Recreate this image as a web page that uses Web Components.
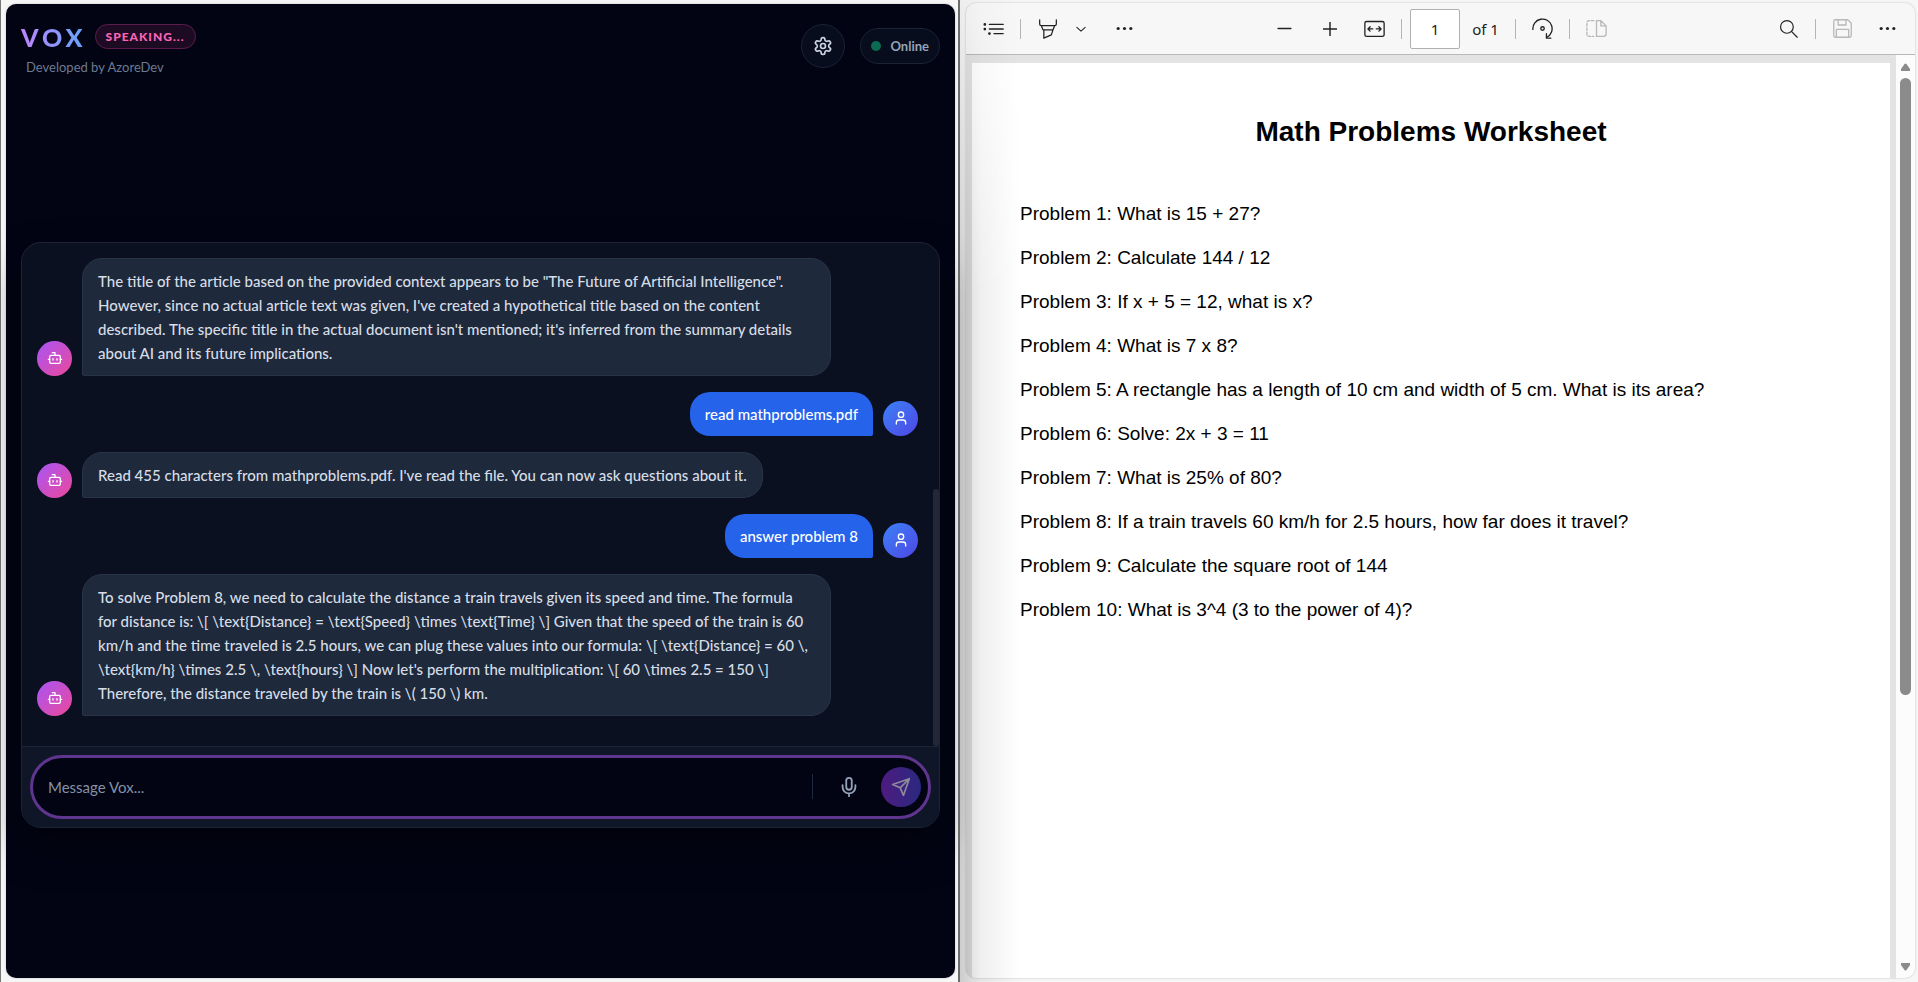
<!DOCTYPE html>
<html lang="en">
<head>
<meta charset="utf-8">
<title>Vox</title>
<style>
  html, body {
    height: 100%;
    margin: 0;
  }
  body {
    font-family: Lato, "Open Sans", sans-serif;
  }
</style>
</head>
<body>
<split-view>
  <vox-app slot="left">
    <chat-message from="bot">The title of the article based on the provided context appears to be "The Future of Artificial Intelligence". However, since no actual article text was given, I've created a hypothetical title based on the content described. The specific title in the actual document isn't mentioned; it's inferred from the summary details about AI and its future implications.</chat-message>
    <chat-message from="user">read mathproblems.pdf</chat-message>
    <chat-message from="bot">Read 455 characters from mathproblems.pdf. I've read the file. You can now ask questions about it.</chat-message>
    <chat-message from="user">answer problem 8</chat-message>
    <chat-message from="bot">To solve Problem 8, we need to calculate the distance a train travels given its speed and time. The formula for distance is: \[ \text{Distance} = \text{Speed} \times \text{Time} \] Given that the speed of the train is 60 km/h and the time traveled is 2.5 hours, we can plug these values into our formula: \[ \text{Distance} = 60 \, \text{km/h} \times 2.5 \, \text{hours} \] Now let's perform the multiplication: \[ 60 \times 2.5 = 150 \] Therefore, the distance traveled by the train is \( 150 \) km.</chat-message>
  </vox-app>
  <pdf-viewer slot="right">
    <pdf-toolbar slot="toolbar"></pdf-toolbar>
    <pdf-page heading="Math Problems Worksheet">
      <p>Problem 1: What is 15 + 27?</p>
      <p>Problem 2: Calculate 144 / 12</p>
      <p>Problem 3: If x + 5 = 12, what is x?</p>
      <p>Problem 4: What is 7 x 8?</p>
      <p>Problem 5: A rectangle has a length of 10 cm and width of 5 cm. What is its area?</p>
      <p>Problem 6: Solve: 2x + 3 = 11</p>
      <p>Problem 7: What is 25% of 80?</p>
      <p>Problem 8: If a train travels 60 km/h for 2.5 hours, how far does it travel?</p>
      <p>Problem 9: Calculate the square root of 144</p>
      <p>Problem 10: What is 3^4 (3 to the power of 4)?</p>
    </pdf-page>
  </pdf-viewer>
</split-view>

<script>
const icons = {
  bot: '<path d="M12 8V4H8M2 14h2M20 14h2M15 13v2M9 13v2"/><rect x="4" y="8" width="16" height="12" rx="2"/>',
  user: '<path d="M19 21v-2a4 4 0 0 0-4-4H9a4 4 0 0 0-4 4v2"/><circle cx="12" cy="7" r="4"/>',
  gear: '<path d="M12.22 2h-.44a2 2 0 0 0-2 2v.18a2 2 0 0 1-1 1.73l-.43.25a2 2 0 0 1-2 0l-.15-.08a2 2 0 0 0-2.73.73l-.22.38a2 2 0 0 0 .73 2.73l.15.1a2 2 0 0 1 1 1.72v.51a2 2 0 0 1-1 1.74l-.15.09a2 2 0 0 0-.73 2.73l.22.38a2 2 0 0 0 2.73.73l.15-.08a2 2 0 0 1 2 0l.43.25a2 2 0 0 1 1 1.73V20a2 2 0 0 0 2 2h.44a2 2 0 0 0 2-2v-.18a2 2 0 0 1 1-1.73l.43-.25a2 2 0 0 1 2 0l.15.08a2 2 0 0 0 2.73-.73l.22-.39a2 2 0 0 0-.73-2.73l-.15-.08a2 2 0 0 1-1-1.74v-.5a2 2 0 0 1 1-1.74l.15-.09a2 2 0 0 0 .73-2.73l-.22-.38a2 2 0 0 0-2.73-.73l-.15.08a2 2 0 0 1-2 0l-.43-.25a2 2 0 0 1-1-1.73V4a2 2 0 0 0-2-2z"/><circle cx="12" cy="12" r="3"/>',
  mic: '<path d="M12 2a3 3 0 0 0-3 3v7a3 3 0 0 0 6 0V5a3 3 0 0 0-3-3ZM19 10v2a7 7 0 0 1-14 0v-2M12 19v3"/>',
  send: '<path d="m22 2-7 20-4-9-9-4ZM22 2 11 13"/>',
  contents: '<path d="M7 7h15M7 12h15M12 17h10"/><path stroke-width="3" d="M2 7h.01M2 12h.01M7 17h.01"/>',
  highlight: '<path d="M2 1v5q0 2 2 2h16q2 0 2-2V1M4 8l2 5h12l2-5M7 13v10l9-4 2-6"/>',
  chevron: '<path d="m2 8 10 9 10-9"/>',
  more: '<g fill="currentColor" stroke="none"><circle cx="4" cy="12" r="2"/><circle cx="12" cy="12" r="2"/><circle cx="20" cy="12" r="2"/></g>',
  minus: '<path d="M4 12h16"/>',
  plus: '<path d="M0 12h24M12 0v24"/>',
  fit: '<rect x="1" y="4" width="22" height="17" rx="2"/><path d="M10 12.500H4.500M7 10l-2.500 2.500L7 15M14 12.500h5.500M17 10l2.500 2.500L17 15"/>',
  rotate: '<path d="M1 13a11 11 0 1 1 16 9"/><path d="M16.500 18v5h5"/><circle cx="12" cy="12" r="2"/>',
  pages: '<path d="M12 3h5l6 6v9q0 3-3 3h-8zM17 3v6h6"/><path stroke-dasharray="3 2" d="M9 3H4Q1 3 1 6v12q0 3 3 3h5"/>',
  search: '<circle cx="10" cy="10" r="8"/><path d="m16 16 7 7"/>',
  save: '<path d="M2 4q0-2 2-2h14l4 4v14q0 2-2 2H4q-2 0-2-2zM7 2v6h9V2M5 22v-9h14v9"/>'
};

function icon(name, size, stroke) {
  return `<svg width="${size}" height="${size}" viewBox="0 0 24 24" fill="none" stroke="currentColor" stroke-width="${stroke || 2}" stroke-linecap="round" stroke-linejoin="round" aria-hidden="true">${icons[name]}</svg>`;
}

class SplitView extends HTMLElement {
  connectedCallback() {
    this.attachShadow({ mode: "open" }).innerHTML = `
      <style>
        :host {
          display: grid;
          grid-template-columns: minmax(0, 1fr) auto minmax(0, 1fr);
          height: 100vh;
          background: #f6f6f6;
        }
        .divider {
          width: 2px;
          background: #6b6b6b;
        }
      </style>
      <slot name="left"></slot>
      <div class="divider"></div>
      <slot name="right"></slot>
    `;
  }
}
customElements.define("split-view", SplitView);

class StatusBadge extends HTMLElement {
  connectedCallback() {
    this.attachShadow({ mode: "open" }).innerHTML = `
      <style>
        :host {
          display: block;
          box-sizing: border-box;
          padding: 0 10px;
          border: 1px solid #5b1d4b;
          border-radius: 13px;
          background: #1d0b24;
          color: #fb64b6;
          font-size: 12px;
          font-weight: 900;
          line-height: 23px;
          letter-spacing: 1px;
        }
      </style>
      <slot></slot>
    `;
  }
}
customElements.define("status-badge", StatusBadge);

class VoxApp extends HTMLElement {
  connectedCallback() {
    this.attachShadow({ mode: "open" }).innerHTML = `
      <style>
        :host {
          display: block;
          box-sizing: border-box;
          min-height: 0;
          padding: 4px 3px 4px 5px;
          border-left: 1px solid #777;
        }
        .window {
          display: flex;
          flex-direction: column;
          box-sizing: border-box;
          height: 100%;
          padding: 0 15px;
          border-radius: 10px;
          background: #020414;
          box-shadow: 0 0 2px #8888;
        }
        header {
          display: flex;
          justify-content: space-between;
          padding: 20px 0 16px;
        }
        .brand {
          display: flex;
          align-items: center;
          gap: 8px;
        }
        h1 {
          margin: 0;
          font-size: 25px;
          font-weight: 900;
          line-height: 24px;
          letter-spacing: 4px;
          background: linear-gradient(90deg, #c084fc, #60a5fa);
          -webkit-background-clip: text;
          background-clip: text;
          color: transparent;
        }
        .author {
          margin: 10px 0 0 5px;
          color: #6b7a90;
          font-size: 13px;
          line-height: 16px;
        }
        .actions {
          display: flex;
          align-items: center;
          align-self: flex-start;
          gap: 15px;
        }
        button {
          display: grid;
          place-items: center;
          width: 44px;
          height: 44px;
          padding: 0;
          border: 1px solid #1a2233;
          border-radius: 50%;
          background: #080d1e;
          color: #cbd5e1;
        }
        .online {
          display: flex;
          align-items: center;
          gap: 9px;
          padding: 0 10px;
          border: 1px solid #1a2233;
          border-radius: 18px;
          background: #080d1e;
          color: #94a3b8;
          font-size: 13px;
          font-weight: 700;
          line-height: 34px;
        }
        .online i {
          width: 10px;
          height: 10px;
          border-radius: 50%;
          background: #0b6b53;
        }
        main {
          display: flex;
          flex: 1;
          flex-direction: column;
          justify-content: center;
          min-height: 0;
        }
        .chat {
          border: 1px solid #1c2535;
          border-radius: 20px;
          background: #0b1020;
          box-shadow: 0 20px 40px #0006;
          overflow: hidden;
        }
        .messages {
          position: relative;
          display: flex;
          flex-direction: column;
          gap: 16px;
          padding: 15px 21px 30px 15px;
        }
        .thumb {
          position: absolute;
          right: 0;
          bottom: 0;
          width: 6px;
          height: 51%;
          border-radius: 3px;
          background: #232838;
        }
      </style>
      <div class="window">
        <header>
          <div>
            <div class="brand">
              <h1>VOX</h1>
              <status-badge>SPEAKING...</status-badge>
            </div>
            <p class="author">Developed by AzoreDev</p>
          </div>
          <div class="actions">
            <button type="button" aria-label="Settings">${icon("gear", 20)}</button>
            <div class="online"><i></i>Online</div>
          </div>
        </header>
        <main>
          <div class="chat">
            <div class="messages">
              <slot></slot>
              <div class="thumb"></div>
            </div>
            <message-composer></message-composer>
          </div>
        </main>
      </div>
    `;
  }
}
customElements.define("vox-app", VoxApp);

class ChatMessage extends HTMLElement {
  connectedCallback() {
    const from = this.getAttribute("from");
    this.attachShadow({ mode: "open" }).innerHTML = `
      <style>
        :host {
          display: flex;
          align-items: flex-end;
          gap: 10px;
          font-size: 15px;
          font-weight: 500;
          line-height: 24px;
        }
        :host([from="user"]) {
          flex-direction: row-reverse;
        }
        .avatar {
          display: grid;
          place-items: center;
          flex: none;
          width: 35px;
          height: 35px;
          border-radius: 50%;
          background: linear-gradient(135deg, #a855f7, #ec4899);
          color: #fff;
        }
        :host([from="user"]) .avatar {
          background: linear-gradient(135deg, #3b82f6, #4f46e5);
        }
        .bubble {
          box-sizing: border-box;
          max-width: 85%;
          padding: 10px 15px;
          border: 1px solid #283548;
          border-radius: 20px 20px 20px 2px;
          background: #1e293b;
          color: #d6dde7;
        }
        :host([from="user"]) .bubble {
          border: 0;
          border-radius: 20px 20px 2px 20px;
          background: #2563eb;
          color: #fff;
        }
      </style>
      <div class="avatar">${icon(from, 16)}</div>
      <div class="bubble"><slot></slot></div>
    `;
  }
}
customElements.define("chat-message", ChatMessage);

class MessageComposer extends HTMLElement {
  connectedCallback() {
    this.attachShadow({ mode: "open" }).innerHTML = `
      <style>
        :host {
          display: block;
          padding: 8px;
          border-top: 1px solid #1a2435;
          background: #0f1627;
        }
        form {
          display: flex;
          align-items: center;
          box-sizing: border-box;
          height: 64px;
          margin: 0;
          padding: 0 7px 0 15px;
          border: 3px solid #5f358f;
          border-radius: 32px;
          background: #020414;
        }
        input {
          flex: 1;
          min-width: 0;
          padding: 0;
          border: 0;
          outline: 0;
          background: none;
          color: #e2e8f0;
          font: inherit;
          font-size: 15px;
          line-height: 24px;
        }
        input::placeholder {
          color: #8591a5;
          opacity: 1;
        }
        .line {
          width: 1px;
          height: 25px;
          background: #1e293b;
        }
        button {
          display: grid;
          place-items: center;
          width: 40px;
          height: 40px;
          padding: 0;
          border: 0;
          border-radius: 50%;
          background: none;
          color: #94a3b8;
        }
        .mic {
          margin: 0 12px 0 16px;
        }
        .send {
          background: linear-gradient(90deg, #4e1c80, #2a2880);
          color: #8d8a9c;
        }
      </style>
      <form>
        <input type="text" placeholder="Message Vox..." aria-label="Message Vox">
        <div class="line"></div>
        <button class="mic" type="button" aria-label="Voice input">${icon("mic", 22)}</button>
        <button class="send" type="button" aria-label="Send">${icon("send", 20)}</button>
      </form>
    `;
  }
}
customElements.define("message-composer", MessageComposer);

class PdfViewer extends HTMLElement {
  connectedCallback() {
    this.attachShadow({ mode: "open" }).innerHTML = `
      <style>
        :host {
          position: relative;
          display: block;
          box-sizing: border-box;
          min-height: 0;
          padding: 3px 3px 4px 6px;
        }
        .frame {
          display: flex;
          flex-direction: column;
          height: 100%;
          border-radius: 10px;
          background: #e3e3e3;
          box-shadow: 0 0 2px #0004;
          overflow: hidden;
        }
        .body {
          display: flex;
          flex: 1;
          gap: 6px;
          min-height: 0;
          padding-left: 6px;
        }
        .view {
          display: flex;
          flex: 1;
          padding-top: 8px;
        }
        .scroll {
          display: flex;
          flex-direction: column;
          align-items: center;
          gap: 7px;
          width: 19px;
          padding: 8px 0 7px;
          box-sizing: border-box;
          background: #fcfcfc;
        }
        .thumb {
          width: 11px;
          height: 68%;
          border-radius: 6px;
          background: #8b8b8b;
        }
        .scroll svg:last-child {
          margin-top: auto;
        }
        /* shade cast by the window on the left */
        .shade {
          position: absolute;
          inset: 0 auto 0 0;
          width: 60px;
          background: linear-gradient(90deg, #0000002a, #00000010 35%, #0000);
          -webkit-mask: linear-gradient(#0003, #000 30%);
          mask: linear-gradient(#0003, #000 30%);
          pointer-events: none;
        }
      </style>
      <div class="frame">
        <slot name="toolbar"></slot>
        <div class="body">
          <div class="view"><slot></slot></div>
          <div class="scroll">
            <svg width="9" height="8" viewBox="0 0 9 8" fill="#8b8b8b"><path d="M3.500 1q1-1 2 0L9 6v2H0V6z"/></svg>
            <div class="thumb"></div>
            <svg width="9" height="8" viewBox="0 0 9 8" fill="#8b8b8b"><path d="M3.500 7q1 1 2 0L9 2V0H0v2z"/></svg>
          </div>
        </div>
      </div>
      <div class="shade"></div>
    `;
  }
}
customElements.define("pdf-viewer", PdfViewer);

class PdfToolbar extends HTMLElement {
  connectedCallback() {
    this.attachShadow({ mode: "open" }).innerHTML = `
      <style>
        :host {
          display: grid;
          grid-template-columns: 1fr auto 1fr;
          align-items: center;
          height: 51px;
          padding: 0 5px;
          border-bottom: 1px solid #b9b9b9;
          background: #f7f7f7;
          color: #222;
          font-family: "Noto Sans", "Open Sans", sans-serif;
          font-size: 15px;
        }
        .group {
          display: flex;
          align-items: center;
        }
        .group:last-child {
          justify-content: flex-end;
        }
        button {
          display: grid;
          place-items: center;
          width: 45px;
          height: 40px;
          padding: 0;
          border: 0;
          background: none;
          color: inherit;
        }
        button:disabled {
          color: #b8b8b8;
        }
        .narrow {
          width: 22px;
          margin-right: 10px;
        }
        .line {
          width: 1px;
          height: 20px;
          margin: 0 4px;
          background: #b5b5b5;
        }
        input {
          box-sizing: border-box;
          width: 50px;
          height: 40px;
          margin: 0 12px 0 4px;
          padding: 0;
          border: 1px solid #b0b0b0;
          border-radius: 2px;
          background: #fff;
          color: inherit;
          font: inherit;
          text-align: center;
        }
        label {
          display: flex;
          align-items: center;
          margin-right: 12px;
        }
      </style>
      <div class="group">
        <button type="button" aria-label="Contents">${icon("contents", 22, 1.5)}</button>
        <div class="line"></div>
        <button type="button" aria-label="Highlight">${icon("highlight", 20, 1.5)}</button>
        <button class="narrow" type="button" aria-label="Highlight colours">${icon("chevron", 10, 2.5)}</button>
        <button type="button" aria-label="More tools">${icon("more", 19)}</button>
      </div>
      <div class="group">
        <button type="button" aria-label="Zoom out">${icon("minus", 19)}</button>
        <button type="button" aria-label="Zoom in">${icon("plus", 14, 2.5)}</button>
        <button type="button" aria-label="Fit to width">${icon("fit", 21, 1.5)}</button>
        <div class="line"></div>
        <label><input type="text" value="1">of 1</label>
        <div class="line"></div>
        <button type="button" aria-label="Rotate">${icon("rotate", 21, 1.5)}</button>
        <div class="line"></div>
        <button type="button" aria-label="Page view" disabled>${icon("pages", 21, 1.5)}</button>
      </div>
      <div class="group">
        <button type="button" aria-label="Search">${icon("search", 19, 1.5)}</button>
        <div class="line"></div>
        <button type="button" aria-label="Save" disabled>${icon("save", 21, 1.5)}</button>
        <button type="button" aria-label="Settings and more">${icon("more", 19)}</button>
      </div>
    `;
  }
}
customElements.define("pdf-toolbar", PdfToolbar);

class PdfPage extends HTMLElement {
  connectedCallback() {
    this.attachShadow({ mode: "open" }).innerHTML = `
      <style>
        :host {
          flex: 1;
          display: block;
          padding: 49px 48px;
          background: #fff;
          color: #000;
          font-family: "Liberation Sans", Arial, sans-serif;
          font-size: 19px;
          line-height: 44px;
        }
        h2 {
          margin: 0 0 40px;
          font-size: 28px;
          line-height: 40px;
          text-align: center;
        }
        ::slotted(p) {
          margin: 0;
        }
      </style>
      <h2>${this.getAttribute("heading")}</h2>
      <slot></slot>
    `;
  }
}
customElements.define("pdf-page", PdfPage);
</script>
</body>
</html>
